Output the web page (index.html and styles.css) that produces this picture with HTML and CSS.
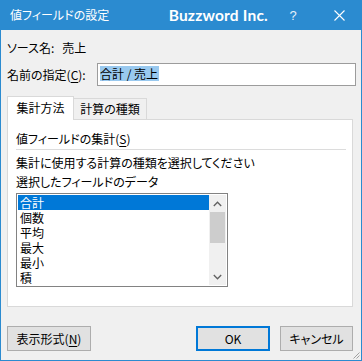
FILE: index.html
```html
<!DOCTYPE html>
<html lang="ja">
<head>
<meta charset="utf-8">
<link rel="stylesheet" href="styles.css">
</head>
<body>
<div class="window">
  <div class="titlebar">
    <span class="title">値フィールドの設定</span>
    <span class="brand">Buzzword Inc.</span>
    <span class="help">?</span>
    <span class="close"><svg width="11" height="11" viewBox="0 0 11 11"><path d="M0.5 0.5 L10.5 10.5 M10.5 0.5 L0.5 10.5" stroke="#fff" stroke-width="1.1" fill="none"/></svg></span>
  </div>
  <div class="content">
    <div class="source">ソース名:&nbsp;&nbsp;&nbsp;売上</div>
    <div class="name-row">
      <span class="name-label">名前の指定(<u>C</u>):</span>
      <div class="textbox"><span class="selected-text">合計 / 売上</span></div>
    </div>
    <div class="tabs">
      <div class="tab active">集計方法</div>
      <div class="tab">計算の種類</div>
    </div>
    <div class="panel">
      <div class="group-title">値フィールドの集計(<u>S</u>)</div>
      <div class="sep"></div>
      <div class="line">集計に使用する計算の種類を選択してください</div>
      <div class="line">選択したフィールドのデータ</div>
      <div class="listbox">
        <div class="items">
          <div class="item sel">合計</div>
          <div class="item">個数</div>
          <div class="item">平均</div>
          <div class="item">最大</div>
          <div class="item">最小</div>
          <div class="item">積</div>
        </div>
        <div class="scrollbar">
          <div class="arrow"><svg width="9" height="6" viewBox="0 0 9 6"><path d="M0.8 5 L4.5 1.2 L8.2 5" stroke="#606060" stroke-width="1.3" fill="none"/></svg></div>
          <div class="thumb"></div>
          <div class="track"></div>
          <div class="arrow"><svg width="9" height="6" viewBox="0 0 9 6"><path d="M0.8 1 L4.5 4.8 L8.2 1" stroke="#606060" stroke-width="1.3" fill="none"/></svg></div>
        </div>
      </div>
    </div>
    <div class="buttons">
      <div class="btn btn-format">表示形式(<u>N</u>)</div>
      <div class="spacer"></div>
      <div class="btn btn-ok">OK</div>
      <div class="btn btn-cancel">キャンセル</div>
    </div>
  </div>
  <svg class="grip" width="7" height="7" viewBox="0 0 7 7"><path d="M6.5 0.5 L0.5 6.5 M6.5 3.5 L3.5 6.5" stroke="#a0a0a0" stroke-width="1" fill="none"/></svg>
</div>
</body>
</html>
```

FILE: styles.css
```css
* { box-sizing: border-box; }
html, body { margin: 0; padding: 0; }
body {
  width: 362px;
  height: 361px;
  background: #f0f0f0;
  font-family: "Noto Sans CJK JP", "Noto Sans", sans-serif;
  font-size: 12px;
  color: #000;
  font-feature-settings: "palt";
}
.window {
  position: relative;
  width: 362px;
  height: 361px;
  border: 1px solid #2b8bd0;
  border-top: 0;
  background: #f0f0f0;
  display: flex;
  flex-direction: column;
}
.titlebar {
  height: 30px;
  margin: 0 -1px;
  background: #2b8bd0;
  color: #fff;
  display: flex;
  align-items: center;
}
.title {
  flex: 1;
  padding-left: 10px;
  font-size: 12px;
  line-height: 16px;
}
.brand {
  font-family: "Lato", "Liberation Sans", sans-serif;
  font-weight: bold;
  font-size: 15.5px;
  letter-spacing: 0.2px;
  margin-right: 2px;
}
.help {
  width: 46px;
  text-align: center;
  font-family: "Liberation Sans", sans-serif;
  font-size: 13px;
  color: #e6f0f9;
}
.close {
  width: 46px;
  height: 30px;
  display: flex;
  align-items: center;
  justify-content: center;
}
.content {
  flex: 1;
  padding: 10px 8px 0 6px;
  display: flex;
  flex-direction: column;
}
.source {
  line-height: 16px;
  height: 16px;
}
.name-row {
  margin-top: 7px;
  margin-right: -3px;
  display: flex;
  align-items: center;
  height: 23px;
}
.name-label {
  width: 90px;
  line-height: 16px;
}
.textbox {
  flex: 1;
  height: 23px;
  border: 1px solid #9c9c9c;
  background: #fff;
  padding: 2px 2px;
  display: flex;
  align-items: flex-start;
}
.selected-text {
  background: #99c9ef;
  line-height: 15px;
  padding-right: 1px;
}
.tabs {
  margin-top: 10px;
  margin-bottom: -1px;
  height: 24px;
  display: flex;
  align-items: flex-start;
  position: relative;
  z-index: 1;
}
.tab {
  border: 1px solid #d9d9d9;
  border-bottom: 0;
  line-height: 16px;
  text-align: center;
}
.tab.active {
  width: 67px;
  height: 24px;
  padding-top: 3px;
  background: #fff;
}
.tab:not(.active) {
  width: 73px;
  height: 21px;
  margin-top: 2px;
  padding-top: 2px;
  border-left: 0;
  background: #f0f0f0;
}
.panel {
  height: 188px;
  border: 1px solid #d9d9d9;
  background: #fff;
  padding: 11px 6px 0 8px;
}
.group-title {
  line-height: 16px;
}
.sep {
  margin-top: 2px;
  height: 1px;
  background: #dcdcdc;
}
.line {
  line-height: 19px;
}
.sep + .line { margin-top: 3px; }
.listbox {
  margin-top: 2px;
  width: 212px;
  height: 94px;
  border: 1px solid #828282;
  padding: 1px;
  display: flex;
  overflow: hidden;
}
.items {
  width: 191px;
  height: 90px;
  overflow: hidden;
}
.item {
  height: 15px;
  line-height: 15px;
  padding-left: 2px;
}
.item.sel {
  background: #0078d7;
  color: #fff;
}
.scrollbar {
  width: 17px;
  height: 90px;
  background: #f0f0f0;
  display: flex;
  flex-direction: column;
}
.arrow {
  height: 17px;
  display: flex;
  align-items: center;
  justify-content: center;
}
.thumb {
  height: 31px;
  margin: 0 1px;
  background: #cdcdcd;
}
.track { flex: 1; }
.buttons {
  margin-top: 19px;
  display: flex;
  height: 25px;
}
.btn {
  height: 25px;
  background: #e1e1e1;
  border: 1px solid #adadad;
  display: flex;
  align-items: center;
  justify-content: center;
  line-height: 16px;
}
.btn-format { width: 84px; }
.spacer { flex: 1; }
.btn-ok {
  width: 74px;
  border: 2px solid #0078d7;
  margin-right: 10px;
}
.btn-cancel { width: 73px; }
.grip {
  position: absolute;
  right: 1px;
  bottom: 1px;
}
u { text-decoration-thickness: 1px; text-underline-offset: 2px; }
```
